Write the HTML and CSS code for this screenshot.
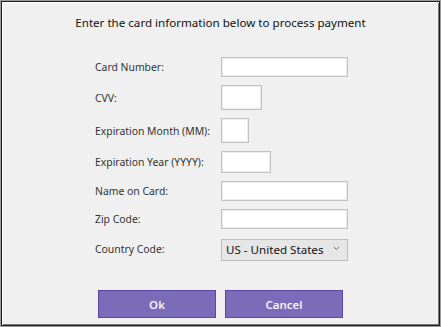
FILE: index.html
```html
<!DOCTYPE html>
<html lang="en">
<head>
    <meta charset="UTF-8">
    <meta name="viewport" content="width=device-width, initial-scale=1.0">
    <title>Payment</title>
    <link rel="stylesheet" href="styles.css">
</head>
<body>
    <div class="dialog">
        <h1>Enter the card information below to process payment</h1>

        <form class="card-form">
            <div class="row">
                <label for="cardNumber">Card Number:</label>
                <input type="text" id="cardNumber" class="field field-wide row-card">
            </div>
            <div class="row">
                <label for="cvv">CVV:</label>
                <input type="text" id="cvv" class="field field-cvv">
            </div>
            <div class="row">
                <label for="expMonth">Expiration Month (MM):</label>
                <input type="text" id="expMonth" class="field field-month">
            </div>
            <div class="row">
                <label for="expYear">Expiration Year (YYYY):</label>
                <input type="text" id="expYear" class="field field-year">
            </div>
            <div class="row">
                <label for="nameOnCard">Name on Card:</label>
                <input type="text" id="nameOnCard" class="field field-wide">
            </div>
            <div class="row">
                <label for="zip">Zip Code:</label>
                <input type="text" id="zip" class="field field-wide">
            </div>
            <div class="row">
                <label for="country">Country Code:</label>
                <span class="select-wrap">
                    <select id="country" class="country">
                        <option>US - United States</option>
                    </select>
                    <svg class="chevron" width="7" height="5" viewBox="0 0 7 5"><path d="M1 1 L3.5 3.5 L6 1" fill="none" stroke="#666" stroke-width="1"/></svg>
                </span>
            </div>
        </form>

        <div class="buttons">
            <button type="button" class="btn">Ok</button>
            <button type="button" class="btn">Cancel</button>
        </div>
    </div>
</body>
</html>
```

FILE: styles.css
```css
html, body {
    margin: 0;
    height: 100%;
}
body {
    font-family: "Noto Sans", "Open Sans", sans-serif;
    color: #222;
    background-color: #f0f0f0;
}
.dialog {
    height: 100vh;
    box-sizing: border-box;
    border: 1px solid #9c9c9c;
    background-color: #f0f0f0;
    box-shadow: inset 1px 1px 0 #1e1e1e, inset -1px -1px 0 #1e1e1e,
                inset 2px 2px 0 #fff, inset -2px -2px 0 #7a7a7a;
    display: flex;
    flex-direction: column;
}

h1 {
    margin: 13px 0 0;
    font-size: 11.6px;
    font-weight: normal;
    text-align: center;
    line-height: 17px;
    color: #111;
}

.card-form {
    margin: 26px 0 0 94px;
    display: flex;
    flex-direction: column;
    gap: 8px;
}
.row {
    display: flex;
    align-items: center;
}
.row label {
    width: 126px;
    font-size: 10.4px;
    color: #333;
}
.field {
    box-sizing: border-box;
    margin: 0;
    padding: 0 3px;
    border: 1px solid #c2c2c2;
    background-color: #fff;
    box-shadow: inset 0 0 0 1px #ececec;
}
.field-wide { width: 127px; height: 20px; }
.field-cvv { width: 41px; height: 25px; }
.field-month { width: 28px; height: 25px; }
.field-year { width: 50px; height: 22px; }

.select-wrap {
    position: relative;
    display: inline-block;
}
.country {
    box-sizing: border-box;
    width: 127px;
    height: 22px;
    margin: 0;
    padding: 0 0 0 4px;
    appearance: none;
    -webkit-appearance: none;
    border: 1px solid #bdbdbd;
    border-radius: 0;
    background-color: #e6e6e6;
    font-family: "Noto Sans", "Open Sans", sans-serif;
    font-size: 11.6px;
    color: #111;
}
.chevron {
    position: absolute;
    right: 8px;
    top: 9px;
}

.buttons {
    margin-top: auto;
    margin-bottom: 8px;
    display: flex;
    justify-content: center;
    gap: 9px;
}
.btn {
    width: 118px;
    height: 28px;
    border: 1px solid #5a48a6;
    background-color: #7b6cb9;
    color: #f4f2fb;
    font-family: "Noto Sans", "Open Sans", sans-serif;
    font-size: 11.5px;
    font-weight: 600;
    cursor: pointer;
}
.btn:hover {
    background-color: #6b5aad;
}
```
